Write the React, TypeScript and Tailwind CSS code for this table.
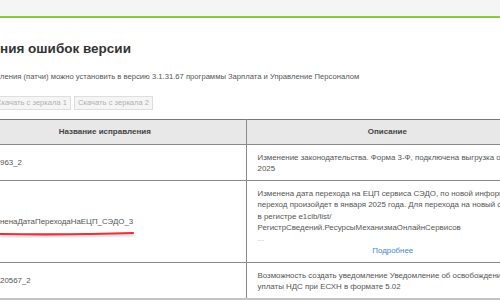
import React from 'react';

interface PatchRow { name: string; lines: string[]; more?: boolean; mark?: boolean }

const rows: PatchRow[] = [
  {
    name: '963_2',
    lines: ['Изменение законодательства. Форма 3-Ф, подключена выгрузка отчета с 1 января', '2025'],
  },
  {
    name: 'ненаДатаПереходаНаЕЦП_СЭДО_3',
    lines: [
      'Изменена дата перехода на ЕЦП сервиса СЭДО, по новой информации',
      'переход произойдет в января 2025 года. Для перехода на новый сервис',
      'в регистре e1cib/list/',
      'РегистрСведений.РесурсыМеханизмаОнлайнСервисов',
    ],
    more: true,
    mark: true,
  },
  {
    name: '20567_2',
    lines: ['Возможность создать уведомление Уведомление об освобождении от', 'уплаты НДС при ЕСХН в формате 5.02'],
  },
];

// red marker stroke under a patch name
function Underline() {
  return (
    <svg className="absolute left-0 top-[4px] pointer-events-none" width="140" height="8" viewBox="0 0 140 8">
      <defs>
        <filter id="soft" x="-10%" y="-100%" width="120%" height="300%">
          <feGaussianBlur stdDeviation="1" />
        </filter>
      </defs>
      <path d="M0 4.5 Q 70 5.5 134 3.5" stroke="#9a9a9a" strokeWidth="2" fill="none" filter="url(#soft)" opacity="0.6" />
      <path d="M0 3 Q 70 4 133 2" stroke="#e5323b" strokeWidth="2.2" fill="none" strokeLinecap="round" />
    </svg>
  );
}

export default function App() {
  return (
    <div className="w-[500px] h-[300px] overflow-hidden bg-white font-['Liberation_Sans',Arial,sans-serif] text-[#555]">
      <div className="h-[18px] bg-[#f5f5f5] border-b-2 border-[#8dc63f]" />

      <h1 className="mt-[23px] text-[13.5px] leading-[16px] font-bold text-[#333] whitespace-nowrap">ния ошибок версии</h1>
      <p className="mt-[14px] text-[7.65px] leading-[11.5px] whitespace-nowrap">
        ления (патчи) можно установить в версию 3.1.31.67 программы Зарплата и Управление Персоналом
      </p>

      <div className="mt-[13px] flex gap-[3px] -ml-[8px]">
        {['Скачать с зеркала 1', 'Скачать с зеркала 2'].map((t) => (
          <button key={t} disabled className="h-[14px] px-[3px] bg-[#f5f5f5] border border-[#dedede] text-[7.6px] leading-[12px] text-[#b0b0b0] whitespace-nowrap">
            {t}
          </button>
        ))}
      </div>

      <div className="mt-[9px] -ml-[36px] w-[564px]">
        <table className="w-full table-fixed border-collapse text-[7.9px] leading-[11.3px]">
          <colgroup>
            <col className="w-[282px]" />
            <col className="w-[282px]" />
          </colgroup>
          <thead>
            <tr className="bg-[#e8e8e8] border-t-[1.5px] border-t-[#777] border-b border-b-[#8a8a8a]">
              <th className="h-[25px] font-bold text-[8px] text-[#444] text-center">Название исправления</th>
              <th className="h-[25px] font-bold text-[8px] text-[#444] text-center border-l border-l-[#8a8a8a]">Описание</th>
            </tr>
          </thead>
          <tbody>
            {rows.map((r, i) => (
              <tr key={r.name} className={i === rows.length - 1 ? 'border-b-2 border-b-[#c4c4c4]' : 'border-b border-b-[#8a8a8a]'}>
                <td className="pl-[36px] align-middle">
                  <div className="relative whitespace-nowrap">
                    {r.name}
                    {r.mark && (
                      <div className="absolute left-0 top-full">
                        <Underline />
                      </div>
                    )}
                  </div>
                </td>
                <td className="border-l border-l-[#8a8a8a] pl-[11px] pt-[7px] pb-[6px] align-top">
                  {r.lines.map((l) => (
                    <div key={l} className="whitespace-nowrap">{l}</div>
                  ))}
                  {r.more && (
                    <>
                      <div className="text-[#aaa]">...</div>
                      <div className="text-center text-[#4a86c4]">Подробнее</div>
                    </>
                  )}
                </td>
              </tr>
            ))}
          </tbody>
        </table>
      </div>
    </div>
  );
}
